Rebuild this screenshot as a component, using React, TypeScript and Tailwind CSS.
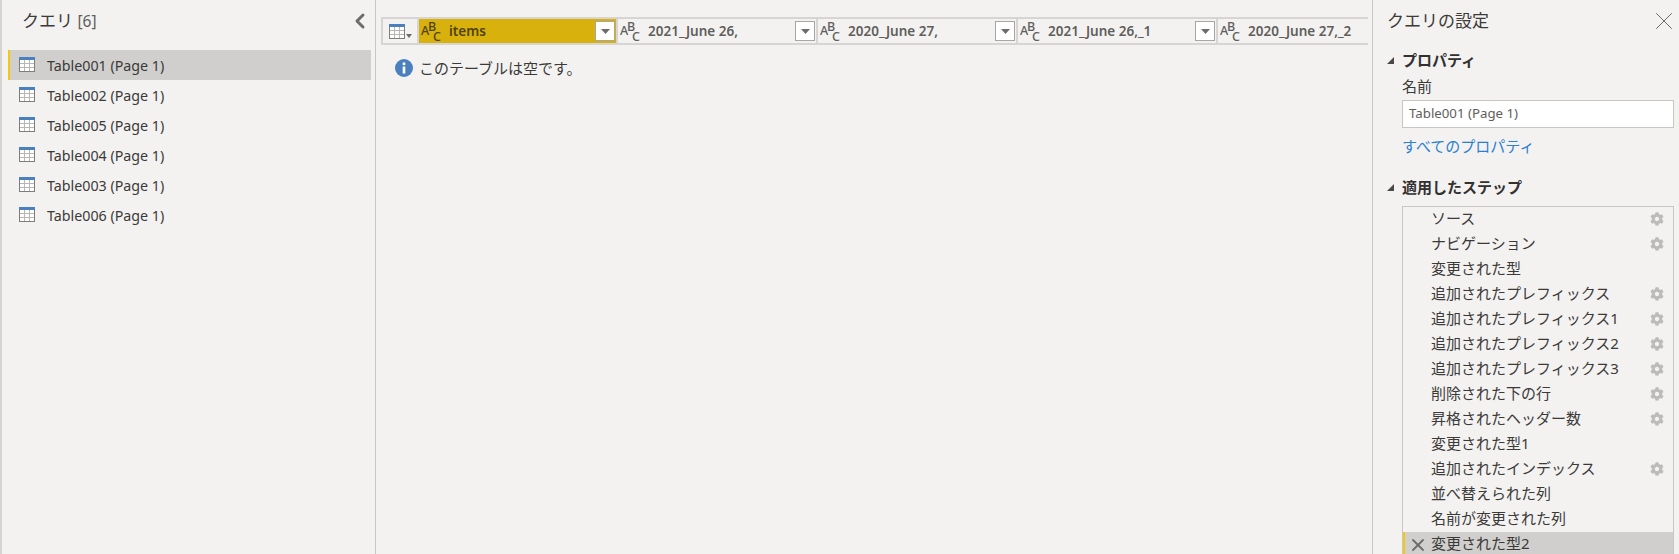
import React from 'react';
import { ChevronLeft, X } from 'lucide-react';
import { FaCog } from 'react-icons/fa';

const font = "font-['Noto_Sans','Noto_Sans_CJK_JP',sans-serif]";

const queries = ['Table001', 'Table002', 'Table005', 'Table004', 'Table003', 'Table006'];

const columns = [
  { name: 'items', width: 'w-[199px]', active: true, menu: true, last: false },
  { name: '2021_June 26,', width: 'w-[200px]', active: false, menu: true, last: false },
  { name: '2020_June 27,', width: 'w-[200px]', active: false, menu: true, last: false },
  { name: '2021_June 26,_1', width: 'w-[200px]', active: false, menu: true, last: false },
  { name: '2020_June 27,_2', width: 'w-[150px]', active: false, menu: false, last: true },
];

const steps = [
  { name: 'ソース', gear: true },
  { name: 'ナビゲーション', gear: true },
  { name: '変更された型', gear: false },
  { name: '追加されたプレフィックス', gear: true },
  { name: '追加されたプレフィックス1', gear: true },
  { name: '追加されたプレフィックス2', gear: true },
  { name: '追加されたプレフィックス3', gear: true },
  { name: '削除された下の行', gear: true },
  { name: '昇格されたヘッダー数', gear: true },
  { name: '変更された型1', gear: false },
  { name: '追加されたインデックス', gear: true },
  { name: '並べ替えられた列', gear: false },
  { name: '名前が変更された列', gear: false },
];

const TableIcon = ({ className = '' }: { className?: string }) => (
  <svg width="16" height="15" viewBox="0 0 16 15" className={className}>
    <rect x="0.5" y="2.5" width="15" height="12" fill="#fff" stroke="#7f7d7b" />
    <rect x="0" y="0" width="16" height="3" fill="#4a80bd" />
    <path d="M5.5 3v11M10.5 3v11M1 6.5h14M1 10.5h14" stroke="#b8b6b4" fill="none" />
  </svg>
);

const AbcIcon = () => (
  <svg width="20" height="20" viewBox="0 0 20 20" className="shrink-0 overflow-visible mt-[1px]">
    <g fill="currentColor" fontFamily="Noto Sans, sans-serif" fontSize="12.5" fontWeight="500">
      <text x="0" y="13">A</text>
      <text x="7" y="9">B</text>
      <text x="12" y="19">C</text>
    </g>
  </svg>
);

const Triangle = () => (
  <svg width="7" height="7" viewBox="0 0 7 7" className="shrink-0">
    <polygon points="7,0 7,7 0,7" fill="#4a4846" />
  </svg>
);

const ColumnHeader = ({ name, width, active, menu, last }: (typeof columns)[number]) => (
  <div className={`${width} h-full flex items-center shrink-0 pl-[2px] pr-[1px] ${last ? '' : 'border-r-2 border-[#d6d5d3]'} ${active ? 'bg-[#d8b10d] text-[#4f4306]' : 'text-[#605e5c]'}`}>
    <AbcIcon />
    <span className="ml-[8px] pt-[2px] text-[13.5px] font-semibold flex-1 whitespace-nowrap leading-none">{name}</span>
    {menu && (
      <div className="w-[20px] h-[20px] bg-white border border-[#a8a6a4] flex items-center justify-center">
        <svg width="9" height="5" viewBox="0 0 9 5">
          <polygon points="0,0 9,0 4.5,5" fill="#6e6c6a" />
        </svg>
      </div>
    )}
  </div>
);

export default function App() {
  return (
    <div className={`${font} w-[1679px] h-[554px] overflow-hidden flex bg-[#f3f2f1] text-[#323130]`}>
      {/* Queries */}
      <aside className="w-[376px] shrink-0 h-full border-l-2 border-r border-l-[#d6d4d2] border-r-[#c8c6c4] pl-[6px] pr-[4px]">
        <div className="h-[50px] flex items-center justify-between pl-[14px] pb-[8px]">
          <div className="text-[17px] text-[#3b3a39]">
            クエリ <span className="text-[15.5px] text-[#605e5c]">[6]</span>
          </div>
          <ChevronLeft className="w-[24px] h-[24px] text-[#6e6c6a] -mr-[1px]" strokeWidth={3} />
        </div>
        {queries.map((q, i) => (
          <div
            key={q}
            className={`h-[30px] flex items-center border-l-2 pl-[9px] ${i === 0 ? 'bg-[#d0cfcd] border-[#f2c811]' : 'border-transparent'}`}
          >
            <TableIcon className="-mt-[2px]" />
            <span className="ml-[12px] pt-[1px] text-[14.25px] text-[#3b3a39]">{q} (Page 1)</span>
          </div>
        ))}
      </aside>

      {/* Preview */}
      <main className="flex-1 h-full pt-[17px] pl-[5px]">
        <div className="w-[987px] h-[28px] flex border-y-2 border-[#d6d5d3]">
          <div className="w-[38px] shrink-0 h-full flex items-center pl-[6px] gap-[1px] border-x-2 border-[#d6d5d3]">
            <TableIcon />
            <svg width="6" height="4" viewBox="0 0 6 4" className="mt-[9px]">
              <polygon points="0,0 6,0 3,4" fill="#6e6c6a" />
            </svg>
          </div>
          {columns.map((c) => (
            <ColumnHeader key={c.name} {...c} />
          ))}
        </div>
        <div className="mt-[12px] ml-[14px] flex items-center gap-[6px]">
          <svg width="18" height="18" viewBox="0 0 18 18">
            <circle cx="9" cy="9" r="9" fill="#4a80bd" />
            <rect x="7.7" y="3.5" width="2.6" height="2.6" fill="#fff" />
            <rect x="7.7" y="7.5" width="2.6" height="7" fill="#fff" />
          </svg>
          <span className="text-[15px] text-[#3b3a39]">このテーブルは空です。</span>
        </div>
      </main>

      {/* Settings */}
      <aside className="w-[307px] shrink-0 h-full border-l border-[#c8c6c4] pl-[14px] pr-[5px]">
        <div className="h-[42px] flex items-center justify-between">
          <span className="text-[17px] text-[#3b3a39]">クエリの設定</span>
          <X className="w-[30px] h-[30px] text-[#6e6c6a] -mr-[5px]" strokeWidth={0.8} />
        </div>
        <div className="h-[36px] flex items-center gap-[8px]">
          <Triangle />
          <span className="text-[15px] font-bold text-[#323130]">プロパティ</span>
        </div>
        <div className="pl-[15px]">
          <div className="h-[16px] mb-[6px] flex items-center text-[15px] text-[#3b3a39]">名前</div>
          <div className="h-[28px] bg-white border border-[#c8c6c4] flex items-center pl-[6px] text-[13.25px] text-[#605e5c]">
            Table001 (Page 1)
          </div>
          <div className="h-[36px] flex items-center text-[15px] text-[#2b80d0]">すべてのプロパティ</div>
        </div>
        <div className="h-[22px] mt-[12px] flex items-center gap-[8px]">
          <Triangle />
          <span className="text-[15px] font-bold text-[#323130]">適用したステップ</span>
        </div>
        <div className="ml-[15px] mt-[8px] border border-[#c8c6c4]">
          {steps.map((s) => (
            <div key={s.name} className="h-[25px] flex items-center pl-[28px] pr-[9px] text-[15px] text-[#3b3a39]">
              <span className="flex-1 whitespace-nowrap -mt-[3px]">{s.name}</span>
              {s.gear && <FaCog className="w-[14px] h-[14px] text-[#bdbbb9] -mt-[1px]" />}
            </div>
          ))}
          <div className="h-[25px] flex items-center bg-[#d0cfcd] border-l-2 border-[#f2c811] pl-[3px] text-[15px] text-[#3b3a39]">
            <X className="w-[20px] h-[20px] text-[#6e6c6a]" strokeWidth={2.2} />
            <span className="ml-[3px] -mt-[3px]">変更された型2</span>
          </div>
        </div>
      </aside>
    </div>
  );
}
